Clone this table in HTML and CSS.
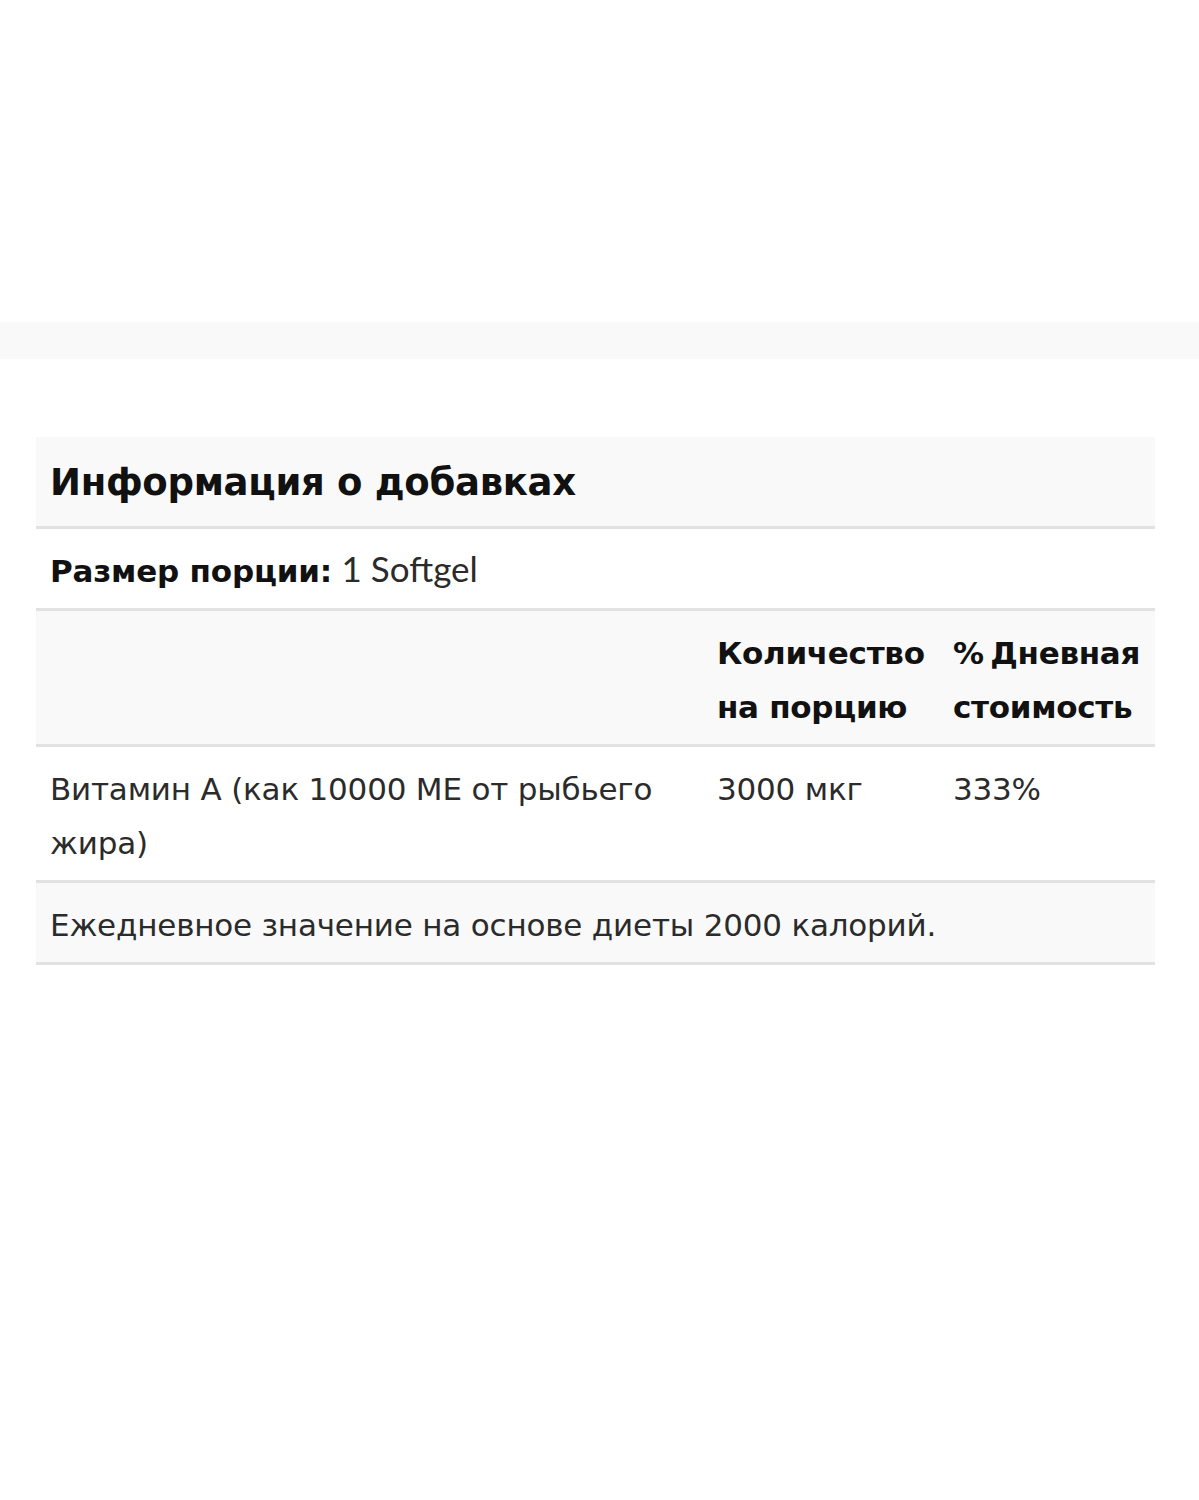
FILE: index.html
```html
<!DOCTYPE html>
<html lang="ru">
<head>
<meta charset="utf-8">
<link rel="stylesheet" href="styles.css">
</head>
<body>
<div class="top-space"></div>
<div class="band"></div>
<div class="wrap">
  <table class="facts">
    <tr class="shade">
      <td colspan="3" class="title">Информация о добавках</td>
    </tr>
    <tr>
      <td colspan="3"><strong>Размер порции:</strong> <span class="latin">1 Softgel</span></td>
    </tr>
    <tr class="shade head">
      <td class="c1"></td>
      <td class="c2">Количество на порцию</td>
      <td class="c3"><span class="nw">% Дневная</span> стоимость</td>
    </tr>
    <tr>
      <td class="c1">Витамин А (как 10000 МЕ от рыбьего жира)</td>
      <td class="c2">3000 мкг</td>
      <td class="c3">333%</td>
    </tr>
    <tr class="shade">
      <td colspan="3">Ежедневное значение на основе диеты 2000 калорий.</td>
    </tr>
  </table>
</div>
</body>
</html>
```
FILE: styles.css
```css
html, body {
  margin: 0;
  padding: 0;
  background: #ffffff;
}
body {
  font-family: "DejaVu Sans", "Liberation Sans", sans-serif;
  color: #2b2b2b;
  width: 1199px;
}
.top-space {
  height: 322px;
}
.band {
  height: 37px;
  background: #f9f9f9;
}
.wrap {
  padding: 78px 44px 0 36px;
}
.facts {
  width: 1119px;
  border-collapse: collapse;
  font-size: 31px;
  line-height: 54px;
  letter-spacing: -0.2px;
}
.facts td {
  padding: 15px 14px 10px 14px;
  border-bottom: 3px solid #e2e2e2;
  vertical-align: top;
  text-align: left;
}
.facts tr.shade td {
  background: #f9f9f9;
}
.facts td.title {
  font-size: 37px;
  font-weight: 700;
  color: #111;
  line-height: 62px;
  padding-top: 15px;
  padding-bottom: 12px;
  letter-spacing: -0.3px;
}
.facts strong {
  font-weight: 700;
  color: #111;
}
.latin {
  font-family: Lato, "Liberation Sans", sans-serif;
  font-size: 35px;
  line-height: 1;
  letter-spacing: 0;
}
.facts tr.head td {
  font-weight: 700;
  color: #111;
  letter-spacing: -0.3px;
}
.nw {
  white-space: nowrap;
  word-spacing: -4px;
}
.c1 { width: 639px; }
.c2 { width: 208px; }
.c3 { width: 188px; }
```
